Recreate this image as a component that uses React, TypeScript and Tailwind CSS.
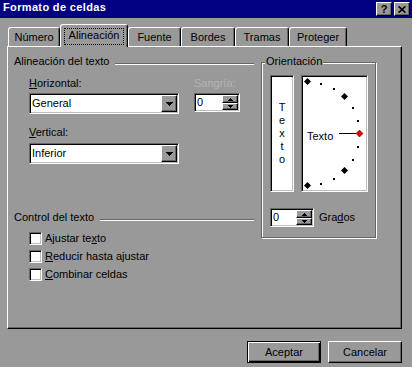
import React from "react";

const raised =
  "border border-t-white border-l-white border-r-black border-b-black shadow-[inset_-1px_-1px_#666]";
const sunken =
  "border border-t-[#666] border-l-[#666] border-r-white border-b-white shadow-[inset_1px_1px_#000,inset_-1px_-1px_#bdbdbd]";

function DownArrow() {
  return (
    <svg width="7" height="4" viewBox="0 0 7 4" shapeRendering="crispEdges">
      <path d="M0 0h7v1H0z M1 1h5v1H1z M2 2h3v1H2z M3 3h1v1H3z" fill="#000" />
    </svg>
  );
}

function SmallUp() {
  return (
    <svg width="5" height="3" viewBox="0 0 5 3" shapeRendering="crispEdges">
      <path d="M2 0h1v1H2z M1 1h3v1H1z M0 2h5v1H0z" fill="#000" />
    </svg>
  );
}

function SmallDown() {
  return (
    <svg width="5" height="3" viewBox="0 0 5 3" shapeRendering="crispEdges">
      <path d="M0 0h5v1H0z M1 1h3v1H1z M2 2h1v1H2z" fill="#000" />
    </svg>
  );
}

function Combo({ value }: { value: string }) {
  return (
    <div className={`flex h-[21px] w-[150px] bg-white p-[1px] ${sunken}`}>
      <div className="flex flex-1 items-center pl-[1px]">{value}</div>
      <div className={`flex h-full w-[16px] items-center justify-center bg-[#999] ${raised}`}>
        <DownArrow />
      </div>
    </div>
  );
}

function Spin({ width }: { width: string }) {
  return (
    <div className={`flex h-[19px] ${width} bg-white p-[1px] ${sunken}`}>
      <div className="flex flex-1 items-center pl-[1px]">0</div>
      <div className="flex w-[16px] flex-col">
        <div className={`flex h-[8px] items-center justify-center bg-[#999] ${raised}`}>
          <SmallUp />
        </div>
        <div className={`flex flex-1 items-center justify-center bg-[#999] ${raised}`}>
          <SmallDown />
        </div>
      </div>
    </div>
  );
}

function Check({ children }: { children: React.ReactNode }) {
  return (
    <div className="flex h-[13px] items-center">
      <span className={`h-[13px] w-[13px] bg-white ${sunken}`} />
      <span className="ml-[3px]">{children}</span>
    </div>
  );
}

function GroupHeader({ children }: { children: React.ReactNode }) {
  return (
    <div className="flex h-[13px] items-center">
      <span>{children}</span>
      <div className="ml-[6px] mt-[5px] flex-1 border-t border-b border-t-[#666] border-b-white" />
    </div>
  );
}

function Tab({ label, w }: { label: string; w: string }) {
  return (
    <div
      className={`flex h-[19px] ${w} justify-center rounded-t-[3px] border-t border-l border-r border-t-white border-l-white border-r-black pt-[3px] shadow-[inset_-1px_0_#666]`}
    >
      {label}
    </div>
  );
}

function ArcDial() {
  const cx = 4.5;
  const cy = 56.5;
  const r = 52;
  const big = [90, 45, -45, -90];
  const small = [75, 60, 30, 15, -15, -30, -60, -75];
  const pt = (a: number) => {
    const rad = (a * Math.PI) / 180;
    return [cx + r * Math.cos(rad), cy - r * Math.sin(rad)];
  };
  const diamond = (x: number, y: number, s: number) =>
    `M${x} ${y - s}L${x + s} ${y}L${x} ${y + s}L${x - s} ${y}Z`;
  return (
    <svg width="63" height="113" viewBox="0 0 63 113">
      {small.map((a) => {
        const [x, y] = pt(a);
        return <rect key={a} x={Math.floor(x)} y={Math.floor(y)} width="2" height="2" fill="#000" />;
      })}
      {big.map((a) => {
        const [x, y] = pt(a);
        return <path key={a} d={diamond(Math.floor(x) + 0.5, Math.floor(y) + 0.5, 3.5)} fill="#000" />;
      })}
      <line x1="36" y1="56.5" x2="53" y2="56.5" stroke="#000" strokeWidth="1" />
      <path d={diamond(56.5, 56.5, 3.5)} fill="#e00000" stroke="#7a0000" strokeWidth="0.6" />
      <text
        x="4"
        y="63"
        fontFamily="'Liberation Sans', Arial, sans-serif"
        fontSize="11"
        fill="#000"
      >
        Texto
      </text>
    </svg>
  );
}

export default function App() {
  return (
    <div className="flex h-[367px] w-[412px] select-none flex-col overflow-hidden bg-[#999] font-['Liberation_Sans',Arial,sans-serif] text-[11px] leading-[13px] text-black">
      {/* Title bar */}
      <div className="flex h-[18px] items-start justify-between bg-[#000080] pl-[3px] pr-[2px] pt-[1px]">
        <span className="font-bold tracking-[0.35px] text-white">Formato de celdas</span>
        <div className="mt-[1px] flex gap-[2px]">
          <div className={`flex h-[14px] w-[16px] items-center justify-center bg-[#999] font-bold leading-none ${raised}`}>
            ?
          </div>
          <div className={`flex h-[14px] w-[16px] items-center justify-center bg-[#999] ${raised}`}>
            <svg width="8" height="7" viewBox="0 0 8 7">
              <path d="M0.6 0.4L7.4 6.6M7.4 0.4L0.6 6.6" stroke="#000" strokeWidth="1.7" />
            </svg>
          </div>
        </div>
      </div>

      {/* Tabs + panel */}
      <div className="ml-[7px] mt-[6px] flex w-[395px] flex-col">
        <div className="flex h-[22px] items-end pl-[1px]">
          <Tab label="Número" w="w-[52px]" />
          <div className="relative z-10 -mb-px flex h-[23px] w-[68px] justify-center rounded-t-[3px] border-t border-l border-r border-t-white border-l-white border-r-black bg-[#999] pt-[3px] shadow-[inset_-1px_0_#666]">
            <div className="h-[17px] border border-dotted border-black px-[4px]">Alineación</div>
          </div>
          <Tab label="Fuente" w="w-[53px]" />
          <Tab label="Bordes" w="w-[54px]" />
          <Tab label="Tramas" w="w-[54px]" />
          <Tab label="Proteger" w="w-[58px]" />
        </div>

        <div className={`flex h-[283px] pl-[6px] pt-[8px] ${raised}`}>
          {/* Left column */}
          <div className="flex w-[240px] flex-col">
            <GroupHeader>Alineación del texto</GroupHeader>
            <div className="pl-[15px]">
              <div className="mt-[9px] grid grid-cols-[150px_46px] gap-x-[15px]">
                <span>
                  <u>H</u>orizontal:
                </span>
                <span className="text-[#b4b4b4]">Sangría:</span>
              </div>
              <div className="mt-[3px] grid grid-cols-[150px_46px] gap-x-[15px]">
                <Combo value="General" />
                <Spin width="w-[46px]" />
              </div>
              <div className="mt-[12px]">
                <u>V</u>ertical:
              </div>
              <div className="mt-[4px]">
                <Combo value="Inferior" />
              </div>
            </div>

            <div className="mt-[47px]">
              <GroupHeader>Control del texto</GroupHeader>
            </div>
            <div className="mt-[8px] flex flex-col gap-[5px] pl-[15px]">
              <Check>
                Ajustar te<u>x</u>to
              </Check>
              <Check>
                <u>R</u>educir hasta ajustar
              </Check>
              <Check>
                <u>C</u>ombinar celdas
              </Check>
            </div>
          </div>

          {/* Orientation group */}
          <div className="relative ml-[7px] mt-[7px] h-[176px] w-[115px] border border-[#666] pl-[8px] pt-[12px] shadow-[inset_1px_1px_#fff,1px_1px_#fff]">
            <span className="absolute -top-[8px] left-[3px] bg-[#999] px-[1px]">Orientación</span>
            <div className="flex">
              <div className={`flex h-[117px] w-[24px] flex-col items-center justify-center bg-white ${sunken}`}>
                <span>T</span>
                <span>e</span>
                <span>x</span>
                <span>t</span>
                <span>o</span>
              </div>
              <div className={`ml-[7px] h-[117px] w-[67px] bg-white p-[1px] ${sunken}`}>
                <ArcDial />
              </div>
            </div>
            <div className="mt-[16px] flex items-center">
              <Spin width="w-[44px]" />
              <span className="ml-[5px]">
                Gra<u>d</u>os
              </span>
            </div>
          </div>
        </div>
      </div>

      {/* Buttons */}
      <div className="mt-[12px] flex justify-end gap-[7px] pr-[10px]">
        <div className="flex h-[22px] w-[74px] items-center justify-center border border-black shadow-[inset_1px_1px_#fff,inset_-1px_-1px_#000,inset_-2px_-2px_#666]">
          Aceptar
        </div>
        <div className={`flex h-[22px] w-[74px] items-center justify-center ${raised}`}>Cancelar</div>
      </div>
    </div>
  );
}
